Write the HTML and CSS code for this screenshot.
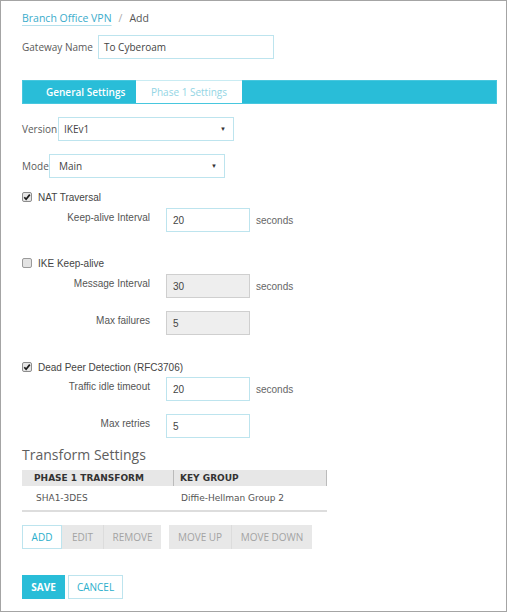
FILE: index.html
```html
<!DOCTYPE html>
<html>
<head>
<meta charset="utf-8">
<link rel="stylesheet" href="styles.css">
</head>
<body>
<div class="frame">
  <div class="crumbs"><span class="crumb-link">Branch Office VPN</span><span class="crumb-sep">/</span><span class="crumb-cur">Add</span></div>

  <div class="row gw-row">
    <span class="lbl gw-lbl">Gateway Name</span>
    <div class="input gw-input">To Cyberoam</div>
  </div>

  <div class="tabs">
    <div class="tab tab-general">General Settings</div>
    <div class="tab tab-phase">Phase 1 Settings</div>
  </div>

  <div class="row ver-row">
    <span class="lbl ver-lbl">Version</span>
    <div class="input select ver-sel"><span>IKEv1</span><span class="arrow">&#9660;</span></div>
  </div>

  <div class="row mode-row">
    <span class="lbl mode-lbl">Mode</span>
    <div class="input select mode-sel"><span>Main</span><span class="arrow">&#9660;</span></div>
  </div>

  <div class="check nat-check">
    <svg class="cb" width="10" height="10" viewBox="0 0 10 10"><rect x="0.5" y="0.5" width="9" height="9" rx="1.5" fill="#e6e6e6" stroke="#8c8c8c"/><path d="M2.3 5.2 L4.1 7.2 L7.8 2.6" fill="none" stroke="#1a1a1a" stroke-width="1.7"/></svg>
    <span>NAT Traversal</span>
  </div>
  <div class="row field f-keep">
    <span class="flbl">Keep-alive Interval</span>
    <div class="input num">20</div>
    <span class="unit">seconds</span>
  </div>

  <div class="check ike-check">
    <svg class="cb" width="10" height="10" viewBox="0 0 10 10"><rect x="0.5" y="0.5" width="9" height="9" rx="1.5" fill="#e3e3e3" stroke="#9a9a9a"/></svg>
    <span>IKE Keep-alive</span>
  </div>
  <div class="row field f-msg">
    <span class="flbl">Message Interval</span>
    <div class="input num disabled">30</div>
    <span class="unit">seconds</span>
  </div>
  <div class="row field f-fail">
    <span class="flbl">Max failures</span>
    <div class="input num disabled">5</div>
  </div>

  <div class="check dpd-check">
    <svg class="cb" width="10" height="10" viewBox="0 0 10 10"><rect x="0.5" y="0.5" width="9" height="9" rx="1.5" fill="#e6e6e6" stroke="#8c8c8c"/><path d="M2.3 5.2 L4.1 7.2 L7.8 2.6" fill="none" stroke="#1a1a1a" stroke-width="1.7"/></svg>
    <span>Dead Peer Detection (RFC3706)</span>
  </div>
  <div class="row field f-idle">
    <span class="flbl">Traffic idle timeout</span>
    <div class="input num">20</div>
    <span class="unit">seconds</span>
  </div>
  <div class="row field f-retry">
    <span class="flbl">Max retries</span>
    <div class="input num">5</div>
  </div>

  <h2 class="heading">Transform Settings</h2>
  <div class="table">
    <div class="thead">
      <div class="th th1">PHASE 1 TRANSFORM</div>
      <div class="th th2">KEY GROUP</div>
    </div>
    <div class="trow">
      <div class="td td1">SHA1-3DES</div>
      <div class="td td2">Diffie-Hellman Group 2</div>
    </div>
  </div>

  <div class="btnbar">
    <div class="btngroup">
      <div class="btn btn-add">ADD</div>
      <div class="btn btn-off b-edit">EDIT</div>
      <div class="btn btn-off b-remove">REMOVE</div>
    </div>
    <div class="btngroup">
      <div class="btn btn-off b-up">MOVE UP</div>
      <div class="btn btn-off b-down">MOVE DOWN</div>
    </div>
  </div>

  <div class="actions">
    <div class="btn btn-save">SAVE</div>
    <div class="btn btn-cancel">CANCEL</div>
  </div>
</div>
</body>
</html>
```

FILE: styles.css
```css
html, body {
  margin: 0;
  padding: 0;
  background: #ffffff;
}
.frame {
  width: 507px;
  height: 612px;
  box-sizing: border-box;
  border: 1px solid #a4a4a4;
  padding: 0 0 0 21px;
  font-family: "Open Sans", "Liberation Sans", sans-serif;
  font-size: 10px;
  color: #555555;
}
.crumbs {
  padding-top: 10px;
  height: 14px;
  line-height: 14px;
  font-size: 10.5px;
  display: flex;
  align-items: center;
}
.crumb-link {
  color: #3aaccb;
  text-decoration: underline;
  text-decoration-color: #b3e0ec;
  text-underline-offset: 3px;
}
.crumb-sep {
  color: #aaaaaa;
  margin: 0 7px 0 7px;
}
.crumb-cur { color: #555555; }

.row {
  display: flex;
  align-items: center;
  height: 24px;
}
.lbl {
  font-size: 10px;
  color: #5a5a5a;
}
.input {
  box-sizing: border-box;
  height: 24px;
  border: 1px solid #bde4ee;
  background: #ffffff;
  display: flex;
  align-items: center;
  padding-left: 6px;
  font-size: 10px;
  color: #444444;
}
.gw-row { margin-top: 10px; }
.gw-lbl { width: 76px; }
.gw-input { width: 176px; padding-left: 5px; }

.tabs {
  margin-top: 21px;
  width: 475px;
  height: 24px;
  box-sizing: border-box;
  background: #29bdd8;
  border: 1px solid #47c7de;
  display: flex;
}
.tab {
  height: 22px;
  display: flex;
  align-items: center;
  font-size: 10px;
}
.tab-general {
  width: 113px;
  padding-left: 23px;
  box-sizing: border-box;
  color: #ffffff;
  font-weight: 600;
}
.tab-phase {
  width: 106px;
  box-sizing: border-box;
  justify-content: center;
  background: #ffffff;
  color: #93d5e4;
  margin-top: -1px;
  height: 23px;
  border-top: 1px solid #c9ecf3;
}

.select {
  justify-content: space-between;
  padding-right: 7px;
}
.arrow {
  font-size: 6px;
  color: #333333;
}
.ver-row { margin-top: 13px; }
.ver-lbl { width: 36px; }
.ver-sel { width: 176px; padding-left: 5px; }
.mode-row { margin-top: 13px; }
.mode-lbl { width: 27px; }
.mode-sel { width: 176px; padding-left: 9px; }

.check {
  display: flex;
  align-items: center;
  height: 14px;
  font-family: "Liberation Sans", Arial, sans-serif;
  font-size: 10px;
  color: #444444;
}
.cb { margin-right: 6px; flex: none; }
.nat-check { margin-top: 12px; }
.ike-check { margin-top: 24px; }
.dpd-check { margin-top: 25px; }

.field {
  font-family: "Liberation Sans", Arial, sans-serif;
  font-size: 10px;
  color: #555555;
}
.flbl {
  width: 144px;
  box-sizing: border-box;
  padding-right: 16px;
  text-align: right;
  margin-top: -5px;
}
.num {
  width: 84px;
  font-family: "Liberation Sans", Arial, sans-serif;
  color: #444444;
  padding-left: 6px;
}
.num.disabled {
  background: #eeeeee;
  border-color: #cfcfcf;
}
.unit {
  margin-left: 6px;
  color: #666666;
}
.f-keep { margin-top: 4px; }
.f-msg { margin-top: 4px; }
.f-fail { margin-top: 13px; }
.f-idle { margin-top: 3px; }
.f-retry { margin-top: 13px; }

.heading {
  margin: 8px 0 0 0;
  height: 18px;
  line-height: 18px;
  font-size: 14px;
  font-weight: 400;
  color: #5e5e5e;
}
.table {
  margin-top: 6px;
  width: 305px;
  font-family: "DejaVu Sans", Verdana, sans-serif;
  font-size: 9px;
  border-bottom: 2px solid #dddddd;
}
.thead {
  display: flex;
  height: 16px;
  background: #e7e7e7;
  border-right: 1px solid #bbbbbb;
  box-sizing: border-box;
}
.th {
  display: flex;
  align-items: center;
  font-weight: 700;
  color: #333333;
}
.th1 {
  width: 152px;
  padding-left: 12px;
  box-sizing: border-box;
  border-right: 1px solid #bbbbbb;
}
.th2 { padding-left: 6px; }
.trow {
  display: flex;
  height: 24px;
  align-items: center;
  color: #555555;
}
.td1 {
  width: 152px;
  padding-left: 14px;
  box-sizing: border-box;
}
.td2 { padding-left: 7px; }

.btnbar {
  margin-top: 13px;
  display: flex;
  gap: 8px;
}
.btngroup { display: flex; }
.btn {
  box-sizing: border-box;
  height: 24px;
  display: flex;
  align-items: center;
  justify-content: center;
  font-size: 10px;
}
.btn-add {
  width: 40px;
  border: 1px solid #bde4ee;
  color: #2aaecb;
  background: #ffffff;
}
.btn-off {
  background: #e8e8e8;
  color: #a3a3a3;
  border-left: 1px solid #dcdcdc;
}
.b-edit { width: 41px; border-left: none; }
.b-remove { width: 58px; }
.b-up { width: 62px; border-left: none; }
.b-down { width: 81px; }

.actions {
  margin-top: 26px;
  display: flex;
  gap: 3px;
}
.btn-save {
  width: 43px;
  background: #29bdd8;
  color: #ffffff;
  font-weight: 700;
}
.btn-cancel {
  width: 55px;
  border: 1px solid #bde4ee;
  color: #2aaecb;
  background: #ffffff;
}
```
